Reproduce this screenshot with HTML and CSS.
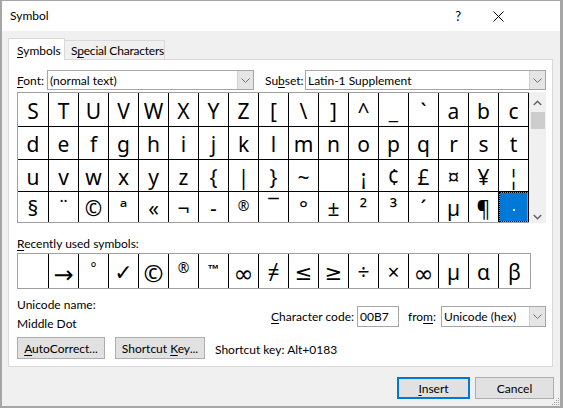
FILE: index.html
```html
<!DOCTYPE html>
<html>
<head>
<meta charset="utf-8">
<link rel="stylesheet" href="styles.css">
</head>
<body>
<div class="window">
  <div class="titlebar">
    <span class="title">Symbol</span>
    <span class="help">?</span>
    <svg class="close" width="11" height="11" viewBox="0 0 11 11"><path d="M0.5 0.5 L10.5 10.5 M10.5 0.5 L0.5 10.5" stroke="#000" stroke-width="1" fill="none"/></svg>
  </div>
  <div class="content">
    <div class="tabs">
      <div class="tab active"><span><u>S</u>ymbols</span></div>
      <div class="tab"><span>S<u>p</u>ecial Characters</span></div>
    </div>
    <div class="panel">
      <div class="fontrow">
        <span class="lbl lbl-font"><u>F</u>ont:</span>
        <div class="combo combo-font"><span class="combo-text">(normal text)</span><span class="combo-btn"><svg width="9" height="5" viewBox="0 0 9 5"><path d="M0.5 0.5 L4.5 4.5 L8.5 0.5" stroke="#707070" fill="none"/></svg></span></div>
        <span class="lbl lbl-subset">Su<u>b</u>set:</span>
        <div class="combo combo-subset"><span class="combo-text">Latin-1 Supplement</span><span class="combo-btn"><svg width="9" height="5" viewBox="0 0 9 5"><path d="M0.5 0.5 L4.5 4.5 L8.5 0.5" stroke="#707070" fill="none"/></svg></span></div>
      </div>
      <div class="gridwrap">
        <div class="grid">
          <div class="row">
            <span class="c">S</span><span class="c">T</span><span class="c">U</span><span class="c">V</span><span class="c">W</span><span class="c">X</span><span class="c">Y</span><span class="c">Z</span><span class="c">[</span><span class="c">\</span><span class="c">]</span><span class="c">^</span><span class="c">_</span><span class="c">`</span><span class="c">a</span><span class="c">b</span><span class="c">c</span>
          </div>
          <div class="row">
            <span class="c">d</span><span class="c">e</span><span class="c">f</span><span class="c">g</span><span class="c">h</span><span class="c">i</span><span class="c">j</span><span class="c">k</span><span class="c">l</span><span class="c">m</span><span class="c">n</span><span class="c">o</span><span class="c">p</span><span class="c">q</span><span class="c">r</span><span class="c">s</span><span class="c">t</span>
          </div>
          <div class="row">
            <span class="c">u</span><span class="c">v</span><span class="c">w</span><span class="c">x</span><span class="c">y</span><span class="c">z</span><span class="c">{</span><span class="c">|</span><span class="c">}</span><span class="c">~</span><span class="c"></span><span class="c">¡</span><span class="c">¢</span><span class="c">£</span><span class="c">¤</span><span class="c">¥</span><span class="c">¦</span>
          </div>
          <div class="row">
            <span class="c">§</span><span class="c">¨</span><span class="c">©</span><span class="c">ª</span><span class="c">«</span><span class="c">¬</span><span class="c">-</span><span class="c sm">®</span><span class="c">¯</span><span class="c">°</span><span class="c">±</span><span class="c">²</span><span class="c">³</span><span class="c">´</span><span class="c">µ</span><span class="c">¶</span><span class="c sel"><span class="dot"></span></span>
          </div>
        </div>
        <div class="scrollbar">
          <svg class="sb-up" width="9" height="6" viewBox="0 0 9 6"><path d="M0.8 5 L4.5 1.2 L8.2 5" stroke="#606060" stroke-width="1.4" fill="none"/></svg>
          <div class="thumb"></div>
          <svg class="sb-down" width="9" height="6" viewBox="0 0 9 6"><path d="M0.8 1 L4.5 4.8 L8.2 1" stroke="#606060" stroke-width="1.4" fill="none"/></svg>
        </div>
      </div>
      <div class="recent-label"><u>R</u>ecently used symbols:</div>
      <div class="recent">
        <span class="c"></span><span class="c arrow">→</span><span class="c tiny top">°</span><span class="c check">✓</span><span class="c copy">©</span><span class="c tiny top">®</span><span class="c tm top">™</span><span class="c inf">∞</span><span class="c">≠</span><span class="c">≤</span><span class="c">≥</span><span class="c">÷</span><span class="c">×</span><span class="c inf">∞</span><span class="c">µ</span><span class="c">α</span><span class="c">β</span>
      </div>
      <div class="info">
        <div class="info-left">
          <div class="uname">Unicode name:</div>
          <div class="mdot">Middle Dot</div>
        </div>
        <div class="info-right">
          <span class="lbl"><u>C</u>haracter code:</span>
          <div class="input">00B7</div>
          <span class="lbl lbl-from">fro<u>m</u>:</span>
          <div class="combo combo-from"><span class="combo-text">Unicode (hex)</span><span class="combo-btn"><svg width="9" height="5" viewBox="0 0 9 5"><path d="M0.5 0.5 L4.5 4.5 L8.5 0.5" stroke="#707070" fill="none"/></svg></span></div>
        </div>
      </div>
      <div class="btnrow">
        <div class="btn btn-auto"><span><u>A</u>utoCorrect...</span></div>
        <div class="btn btn-short"><span>Shortcut <u>K</u>ey...</span></div>
        <span class="shortcut">Shortcut key: Alt+0183</span>
      </div>
    </div>
    <div class="footer">
      <div class="btn btn-insert"><span><u>I</u>nsert</span></div>
      <div class="btn btn-cancel"><span>Cancel</span></div>
    </div>
  </div>
  <svg class="grip" width="8" height="8" viewBox="0 0 8 8">
    <rect x="6" y="0" width="1" height="1" fill="#a0a0a0"/>
    <rect x="4" y="2" width="1" height="1" fill="#a0a0a0"/><rect x="6" y="2" width="1" height="1" fill="#a0a0a0"/>
    <rect x="2" y="4" width="1" height="1" fill="#a0a0a0"/><rect x="4" y="4" width="1" height="1" fill="#a0a0a0"/><rect x="6" y="4" width="1" height="1" fill="#a0a0a0"/>
    <rect x="0" y="6" width="1" height="1" fill="#a0a0a0"/><rect x="2" y="6" width="1" height="1" fill="#a0a0a0"/><rect x="4" y="6" width="1" height="1" fill="#a0a0a0"/><rect x="6" y="6" width="1" height="1" fill="#a0a0a0"/>
  </svg>
</div>
</body>
</html>
```
FILE: styles.css
```css
* { box-sizing: border-box; }
html, body { margin: 0; padding: 0; }
body {
  width: 563px; height: 408px; overflow: hidden;
  font-family: Lato, "Noto Sans", "DejaVu Sans", sans-serif;
  font-size: 12px; color: #000; background: #fff;
  white-space: nowrap;
}
u { text-decoration: underline; text-underline-offset: 2px; }
.window {
  position: relative;
  width: 563px; height: 408px;
  border-style: solid; border-color: #a6a6a6;
  border-width: 1px 3px 2px 2px;
  background: #f0f0f0;
  display: flex; flex-direction: column;
}
.titlebar {
  height: 30px; background: #fff;
  display: flex; align-items: center;
  padding-left: 8px;
}
.title { font-size: 12px; margin-top: -1px; }
.help { margin-left: auto; font-size: 13px; margin-right: 32px; margin-top: -1px; }
.close { margin-right: 56px; }
.content { padding: 7px 6px 0 6px; display: flex; flex-direction: column; }
.tabs { display: flex; align-items: flex-end; height: 21px; position: relative; z-index: 1; }
.tab {
  border: 1px solid #d9d9d9; border-bottom: none;
  height: 19px; display: flex; align-items: center;
  padding: 0 6px; background: #f0f0f0;
}
.tab.active {
  background: #fff; height: 22px; margin-bottom: -1px;
  width: 57px; padding-left: 8px; padding-top: 1px;
}
.tab:not(.active) { width: 101px; margin-left: -1px; padding-left: 6px; padding-top: 1px; letter-spacing: -0.2px; }
.panel {
  width: 545px; background: #fff;
  border: 1px solid #d9d9d9;
  padding: 10px 6px 7px 8px;
}
.fontrow { display: flex; align-items: center; height: 20px; }
.lbl-font { width: 30px; }
.lbl-subset { width: 40px; margin-left: 11px; }
.combo {
  height: 20px; border: 1px solid #a6a6a6; background: #fff;
  display: flex; align-items: center; justify-content: space-between;
}
.combo-text { padding-left: 2px; }
.combo-btn {
  width: 16px; height: 18px; background: #e5e5e5;
  border-left: 1px solid #d0d0d0;
  display: flex; align-items: center; justify-content: center;
}
.combo-font { width: 207px; }
.combo-subset { width: 241px; }
.gridwrap { display: flex; margin-top: 2px; }
.grid {
  border-left: 1px solid #a0a0a0; border-top: 1px solid #a0a0a0; border-bottom: 1px solid #a0a0a0;
  font-size: 21px; font-family: "Noto Sans", "DejaVu Sans", sans-serif;
}
.row { display: flex; border-bottom: 1px solid #000; }
.row:nth-child(1) { height: 34px; }
.row:nth-child(2) { height: 33px; }
.row:nth-child(3) { height: 32px; }
.row:nth-child(4) { height: 30px; border-bottom: none; }
.c {
  width: 30px; border-right: 1px solid #000;
  display: flex; align-items: center; justify-content: center;
  line-height: 1; padding-top: 3px;
}
.c:first-child { width: 31px; }
.c.sm { font-size: 14px; padding-bottom: 6px; }
.c.sel {
  background: #0078d7;
  box-shadow: inset 0 0 0 1px #f08000;
  outline: 1px dotted #000; outline-offset: -1px;
}
.dot { width: 2px; height: 2px; background: #fff; margin-top: 2px; }
.scrollbar {
  width: 17px; background: #f0f0f0;
  display: flex; flex-direction: column; align-items: center;
}
.sb-up { margin-top: 8px; }
.thumb { width: 14px; height: 17px; background: #cdcdcd; margin-top: 6px; }
.sb-down { margin-top: auto; margin-bottom: 3px; }
.recent-label { margin-top: 13px; height: 16px; line-height: 16px; }
.recent {
  display: flex; margin-top: 1px; width: 514px; height: 36px;
  border: 1px solid #a0a0a0; font-size: 21px; font-family: "Noto Sans", "DejaVu Sans", sans-serif;
}
.recent .c:last-child { border-right: none; width: 31px; }
.recent .arrow { font-size: 24px; padding-top: 8px; font-family: "DejaVu Sans", sans-serif; }
.recent .check { font-family: "DejaVu Sans", sans-serif; font-size: 22px; font-weight: bold; }
.recent .copy { font-size: 24px; }
.recent .tiny { font-size: 14px; }
.recent .top { align-items: flex-start; padding-top: 7px; }
.recent .tm { font-size: 12px; font-weight: bold; font-family: "Liberation Sans", sans-serif; padding-top: 9px; }
.recent .inf { font-size: 24px; }
.info { display: flex; justify-content: space-between; margin-top: 8px; }
.uname { height: 16px; line-height: 16px; }
.mdot { height: 16px; line-height: 16px; margin-top: 3px; }
.info-right { display: flex; align-items: center; margin-top: 9px; height: 21px; }
.input {
  width: 42px; height: 21px; border: 1px solid #a6a6a6; background: #fff;
  margin-left: 3px; padding-left: 2px; line-height: 19px;
}
.lbl-from { margin-left: 9px; }
.combo-from { width: 105px; height: 21px; margin-left: 5px; }
.combo-from .combo-btn { height: 19px; }
.btnrow { display: flex; align-items: center; margin-top: 5px; height: 22px; }
.btn {
  height: 22px; background: #e1e1e1; border: 1px solid #adadad;
  display: flex; align-items: center; justify-content: center;
}
.btn-auto { width: 88px; }
.btn-short { width: 90px; margin-left: 10px; }
.shortcut { margin-left: 10px; margin-top: 2px; }
.footer { display: flex; justify-content: flex-end; margin-top: 10px; }
.btn-insert { width: 73px; border: 2px solid #0078d7; }
.btn-cancel { width: 79px; margin-left: 5px; }
.grip { position: absolute; right: 0; bottom: 0; }
```
